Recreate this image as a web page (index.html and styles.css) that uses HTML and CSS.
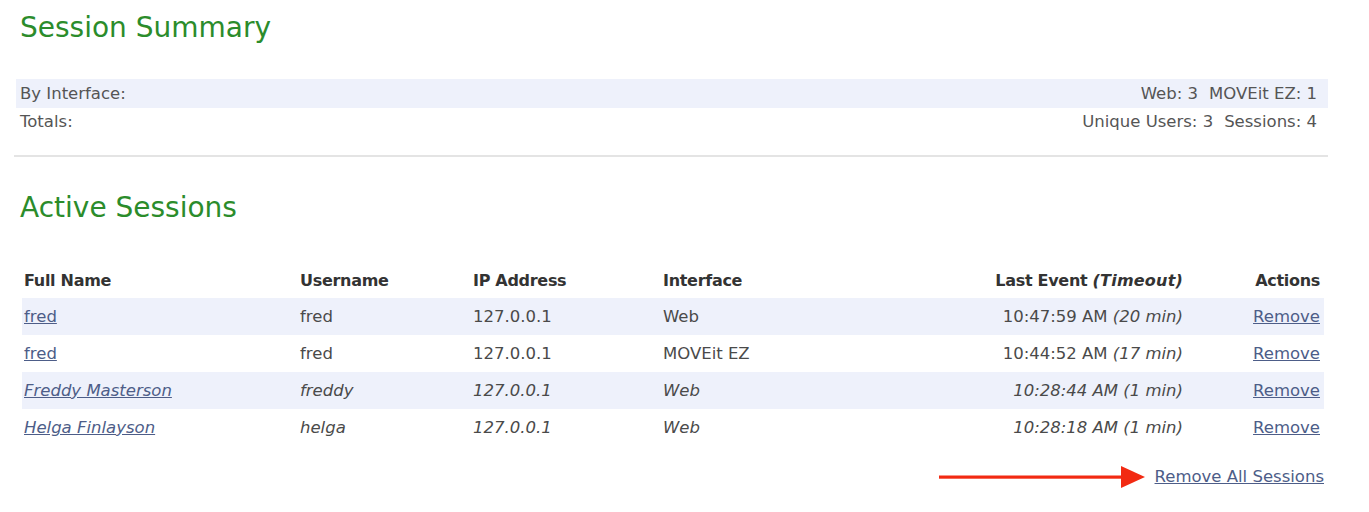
FILE: index.html
```html
<!DOCTYPE html>
<html>
<head>
<meta charset="utf-8">
<link rel="stylesheet" href="styles.css">
</head>
<body>
<div class="page">
  <h1 class="title title-first">Session Summary</h1>
  <div class="summary">
    <div class="sum-row band"><span>By Interface:</span><span>Web: 3<span class="gap"></span>MOVEit EZ: 1</span></div>
    <div class="sum-row"><span>Totals:</span><span>Unique Users: 3<span class="gap"></span>Sessions: 4</span></div>
  </div>
  <div class="rule"></div>
  <h2 class="title title-second">Active Sessions</h2>
  <table class="sessions">
    <colgroup>
      <col class="c1"><col class="c2"><col class="c3"><col class="c4"><col class="c5"><col class="c6">
    </colgroup>
    <thead>
      <tr>
        <th>Full Name</th><th>Username</th><th>IP Address</th><th>Interface</th>
        <th class="r">Last Event <i>(Timeout)</i></th><th class="r">Actions</th>
      </tr>
    </thead>
    <tbody>
      <tr class="band">
        <td><a href="#">fred</a></td><td>fred</td><td>127.0.0.1</td><td>Web</td>
        <td class="r">10:47:59 AM <i>(20 min)</i></td><td class="r"><a href="#">Remove</a></td>
      </tr>
      <tr>
        <td><a href="#">fred</a></td><td>fred</td><td>127.0.0.1</td><td>MOVEit EZ</td>
        <td class="r">10:44:52 AM <i>(17 min)</i></td><td class="r"><a href="#">Remove</a></td>
      </tr>
      <tr class="band idle">
        <td><a href="#">Freddy Masterson</a></td><td>freddy</td><td>127.0.0.1</td><td>Web</td>
        <td class="r">10:28:44 AM (1 min)</td><td class="r"><a href="#" class="upright">Remove</a></td>
      </tr>
      <tr class="idle">
        <td><a href="#">Helga Finlayson</a></td><td>helga</td><td>127.0.0.1</td><td>Web</td>
        <td class="r">10:28:18 AM (1 min)</td><td class="r"><a href="#" class="upright">Remove</a></td>
      </tr>
    </tbody>
  </table>
  <div class="remove-all">
    <svg class="arrow" width="206" height="24" viewBox="0 0 206 24">
      <rect x="0" y="10.5" width="186" height="3.2" fill="#f22a12"/>
      <polygon points="182,1 206,12 182,23" fill="#f22a12"/>
    </svg>
    <a href="#">Remove All Sessions</a>
  </div>
</div>
</body>
</html>
```

FILE: styles.css
```css
html, body {
  margin: 0;
  padding: 0;
  background: #ffffff;
}

body {
  font-family: "DejaVu Sans", Verdana, sans-serif;
  font-size: 16.5px;
  color: #4a4a4a;
}

.page {
  width: 1314px;
  margin-left: 14px;
}

.title {
  margin: 0;
  font-weight: normal;
  font-size: 28px;
  line-height: 34px;
  color: #2b8c2b;
  padding-left: 6px;
}

.title-first {
  padding-top: 11px;
}

.summary {
  margin-top: 34px;
  margin-left: 2px;
  display: flex;
  flex-direction: column;
}

.sum-row {
  display: flex;
  justify-content: space-between;
  align-items: center;
  height: 28.5px;
  padding: 0 11px 0 4px;
  color: #555555;
}

.band {
  background: #eef1fb;
}

.gap {
  display: inline-block;
  width: 11px;
}

.rule {
  margin-top: 19px;
  height: 2px;
  background: #e4e4e4;
}

.title-second {
  margin-top: 34px;
}

.sessions {
  margin-top: 37px;
  margin-left: 8px;
  width: 1302px;
  border-collapse: collapse;
  table-layout: fixed;
}

.c1 { width: 276px; }
.c2 { width: 173px; }
.c3 { width: 190px; }
.c4 { width: 239px; }
.c5 { width: 287px; }
.c6 { width: 137px; }

.sessions th,
.sessions td {
  padding: 0 4px 0 2px;
  text-align: left;
  white-space: nowrap;
}

.sessions th {
  height: 36px;
  font-size: 16px;
  font-weight: bold;
  color: #333333;
  letter-spacing: -0.3px;
}

.sessions th i {
  font-weight: bold;
  letter-spacing: 0.2px;
}

.sessions td {
  height: 37px;
}

.sessions .r {
  text-align: right;
}

.idle td {
  font-style: italic;
}

.idle td .upright {
  font-style: normal;
}

a {
  color: #4d5d88;
  text-decoration: underline;
}

.remove-all {
  margin-top: 12px;
  height: 37px;
  display: flex;
  justify-content: flex-end;
  align-items: center;
  gap: 10px;
  padding-right: 4px;
}

.arrow {
  display: block;
}
```
